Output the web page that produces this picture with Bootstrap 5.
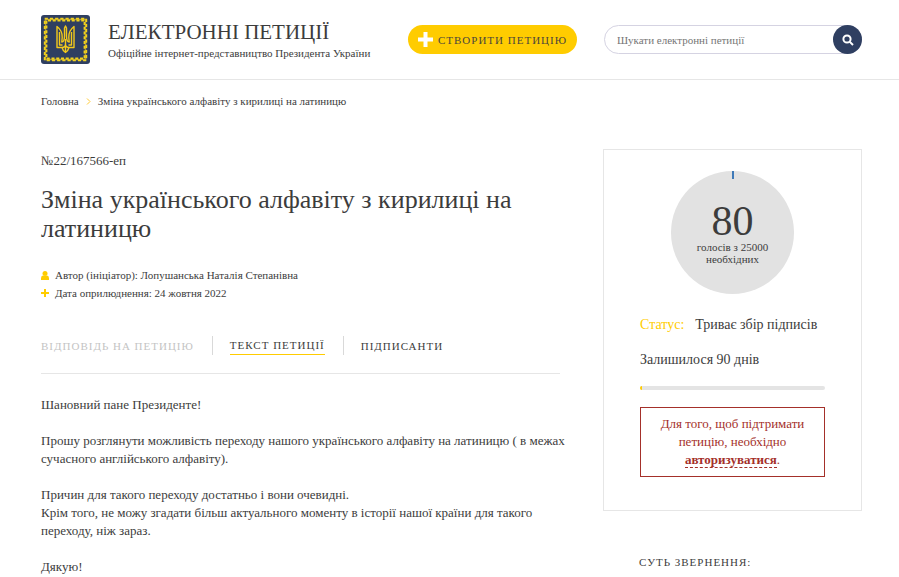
<!DOCTYPE html>
<html lang="uk">
<head>
<meta charset="utf-8">
<meta name="viewport" content="width=device-width, initial-scale=1">
<title>Електронні петиції</title>
<link href="https://cdn.jsdelivr.net/npm/bootstrap@5.3.0/dist/css/bootstrap.min.css" rel="stylesheet">
<style>
  :root { --ink: #3c3c3c; --gold: #ffcc00; --navy: #2f3f61; --line: #e6e6e6; --alert: #a4302a; }
  body { font-family: "Liberation Serif", serif; font-size: 13px; line-height: 18px; color: var(--ink); }
  a { color: inherit; text-decoration: none; }
  .page-wrap { padding: 0 37px 0 41px; }
  .site-header { border-bottom: 1px solid var(--line); }
  .header-row { height: 79px; }
  .brand { width: 367px; gap: 18px; }
  .brand-title { font-size: 21px; line-height: 26px; }
  .brand-sub { font-size: 11px; line-height: 16px; }
  .create-btn { width: 169px; height: 29px; background: var(--gold); color: #4a463c; font-size: 11px; line-height: 18px; letter-spacing: 1px; gap: 5px; }
  .create-btn:hover { background: #f2c200; }
  .search { margin-left: 27px; height: 29px; border: 1px solid #d5d3e2; }
  .search input { font-size: 11px; line-height: 16px; padding: 0 12px; color: var(--ink); min-width: 0; outline: 0; }
  .search input::placeholder { color: #757575; }
  .search button { width: 29px; height: 29px; margin: -1px; background: var(--navy); }
  .crumbs { font-size: 11px; padding-top: 12px; gap: 7px; }
  .columns { gap: 43px; padding-top: 39px; }
  .side { flex: 0 0 259px; }
  .number { padding-top: 3px; }
  .petition-title { font-size: 26px; line-height: 29px; margin: 15px 0 23px; padding-right: 40px; }
  .meta { font-size: 11px; line-height: 18px; gap: 6px; }
  .tabs { border-bottom: 1px solid var(--line); padding: 34px 0 18px; }
  .tabs li { line-height: 18px; }
  .tabs li + li { border-left: 1px solid #d9d9d9; padding-left: 17px; margin-left: 18px; }
  .tabs button { font-size: 11px; line-height: 17px; letter-spacing: 1px; color: var(--ink); border-bottom: 1px solid transparent; }
  .tabs button.current { border-color: var(--gold); }
  .tabs button:disabled { color: #c4c4c4; opacity: 1; }
  .letter { padding-top: 22px; margin-right: -12px; }
  .letter p { margin: 0 0 18px; }
  .vote-card { border: 1px solid var(--line); padding: 21px 36px 33px; font-size: 14px; }
  .dial { width: 123px; height: 123px; background: #e2e2e2; }
  .dial svg { top: 0; left: 50%; margin-left: -1px; }
  .dial-count { font-size: 42px; line-height: 40px; }
  .dial-note { font-size: 11px; line-height: 12px; padding: 0 20px; }
  .status { margin: 22px 0 17px; gap: 11px; }
  .status dt { color: var(--gold); }
  .bar { height: 4px; background: #e4e4e4; margin: 17px 0; border-radius: 2px; }
  .bar-fill { background: var(--gold); }
  .notice { border: 1px solid var(--alert); color: var(--alert); font-size: 13px; padding: 7px 12px; }
  .notice a { border-bottom: 1px dashed var(--alert); }
  .side-title { font-size: 11px; line-height: 18px; letter-spacing: 1px; margin: 42px 0 20px 36px; }
</style>
<script src="https://cdn.jsdelivr.net/npm/bootstrap@5.3.0/dist/js/bootstrap.bundle.min.js" defer></script>
</head>
<body class="bg-white">
<header class="site-header">
  <div class="page-wrap header-row d-flex align-items-center">
    <a class="brand d-flex flex-shrink-0 align-items-center" href="#">
      <svg width="49" height="49" viewBox="0 0 49 49" aria-hidden="true">
        <rect width="49" height="49" rx="3" fill="#2f3f61"/>
        <rect x="4.500" y="4.500" width="40" height="40" fill="none" stroke="#a9953a" stroke-width="1.500"/>
        <rect x="3.700" y="3.700" width="41.600" height="41.600" fill="none" stroke="#f2d21c" stroke-width="1.800" stroke-dasharray="3.200 2"/>
        <rect x="5.500" y="5.500" width="38" height="38" fill="none" stroke="#f2d21c" stroke-width="1.800" stroke-dasharray="3 1.750" stroke-dashoffset="-1.500"/>
        <g fill="none" stroke="#f2c91c" stroke-width="1.400" stroke-linejoin="round">
          <path d="M16 11.500V32.500H21C22 36 24.500 37.500 24.500 37.500S27 36 28 32.500H33V11.500C28.500 15 27.500 18 27.800 22.500L28.200 27C26 27 25.500 24.500 25.500 21V13L24.500 11L23.500 13V21C23.500 24.500 23 27 20.800 27L21.200 22.500C21.500 18 20.500 15 16 11.500Z"/>
          <path d="M18.500 17V30H21.500M30.500 17V30H27.500M24.500 24V37M21 32.500C24 32.500 24.500 30 24.500 29C24.500 30 25 32.500 28 32.500"/>
        </g>
      </svg>
      <span>
        <span class="brand-title d-block">ЕЛЕКТРОННІ ПЕТИЦІЇ</span>
        <span class="brand-sub d-block">Офіційне інтернет-представництво Президента України</span>
      </span>
    </a>
    <button type="button" class="create-btn btn border-0 rounded-pill p-0 flex-shrink-0 d-flex align-items-center justify-content-center text-nowrap">
      <svg class="flex-shrink-0" width="15" height="15" viewBox="0 0 15 15" aria-hidden="true"><path d="M5.500 0h4v5.500H15v4H9.500V15h-4V9.500H0v-4h5.500z" fill="#fff"/></svg>
      СТВОРИТИ ПЕТИЦІЮ
    </button>
    <form class="search d-flex flex-grow-1 rounded-pill" role="search">
      <input class="flex-grow-1 border-0 bg-transparent" type="search" placeholder="Шукати електронні петиції" aria-label="Шукати електронні петиції">
      <button type="submit" class="btn border-0 p-0 rounded-circle flex-shrink-0 d-flex align-items-center justify-content-center" aria-label="Шукати">
        <svg width="12" height="12" viewBox="0 0 12 12" fill="none" stroke="#fff" stroke-width="2" aria-hidden="true"><circle cx="5" cy="5" r="3.600"/><path d="M7.600 7.600L11 11"/></svg>
      </button>
    </form>
  </div>
</header>

<div class="page-wrap">
  <nav class="crumbs d-flex align-items-center" aria-label="Навігація">
    <a href="#">Головна</a>
    <svg width="5" height="7" viewBox="0 0 5 7" fill="none" stroke="#ffc933" aria-hidden="true"><path d="M1 .5l3 3-3 3"/></svg>
    <span aria-current="page">Зміна українського алфавіту з кирилиці на латиницю</span>
  </nav>

  <div class="columns d-flex align-items-start">
    <main class="flex-grow-1">
      <div class="number">№22/167566-еп</div>
      <h1 class="petition-title fw-normal">Зміна українського алфавіту з кирилиці на латиницю</h1>
      <div class="meta d-flex align-items-center">
        <svg width="8" height="9" viewBox="0 0 8 9" fill="#ffcc00" aria-hidden="true"><circle cx="4" cy="2.500" r="2.500"/><path d="M0 9V7.200Q0 4.600 2 4.400Q4 5.600 6 4.400Q8 4.600 8 7.200V9z"/></svg>
        Автор (ініціатор): Лопушанська Наталія Степанівна
      </div>
      <div class="meta d-flex align-items-center">
        <svg width="8" height="8" viewBox="0 0 8 8" fill="#ffcc00" aria-hidden="true"><path d="M3 0h2v3h3v2H5v3H3V5H0V3h3z"/></svg>
        Дата оприлюднення: 24 жовтня 2022
      </div>
      <ul class="tabs list-unstyled d-flex mb-0">
        <li><button type="button" class="btn p-0 border-0 rounded-0" disabled>ВІДПОВІДЬ НА ПЕТИЦІЮ</button></li>
        <li><button type="button" class="current btn p-0 border-top-0 border-start-0 border-end-0 rounded-0">ТЕКСТ ПЕТИЦІЇ</button></li>
        <li><button type="button" class="btn p-0 border-0 rounded-0">ПІДПИСАНТИ</button></li>
      </ul>
      <article class="letter">
        <p>Шановний пане Президенте!</p>
        <p>Прошу розглянути можливість переходу нашого українського алфавіту на латиницю ( в межах сучасного англійського алфавіту).</p>
        <p>Причин для такого переходу достатньо і вони очевидні.<br>Крім того, не можу згадати більш актуального моменту в історії нашої країни для такого переходу, ніж зараз.</p>
        <p>Дякую!</p>
      </article>
    </main>

    <aside class="side">
      <section class="vote-card">
        <div class="dial position-relative rounded-circle mx-auto d-flex flex-column justify-content-center text-center">
          <svg class="position-absolute" width="2" height="8" viewBox="0 0 2 8" aria-hidden="true"><path d="M0 0h2v8H0z" fill="#3f7ab8"/></svg>
          <div class="dial-count">80</div>
          <div class="dial-note">голосів з 25000 необхідних</div>
        </div>
        <dl class="status d-flex">
          <dt class="fw-normal">Статус:</dt>
          <dd class="mb-0 text-nowrap">Триває збір підписів</dd>
        </dl>
        <div class="remain">Залишилося 90 днів</div>
        <div class="bar progress" role="progressbar" aria-label="Минуло днів" aria-valuenow="1" aria-valuemin="0" aria-valuemax="100">
          <div class="bar-fill progress-bar" style="width: 1%"></div>
        </div>
        <div class="notice text-center">Для того, щоб підтримати петицію, необхідно <a class="fw-bold" href="#">авторизуватися</a>.</div>
      </section>
      <h2 class="side-title fw-normal">СУТЬ ЗВЕРНЕННЯ:</h2>
    </aside>
  </div>
</div>
</body>
</html>
